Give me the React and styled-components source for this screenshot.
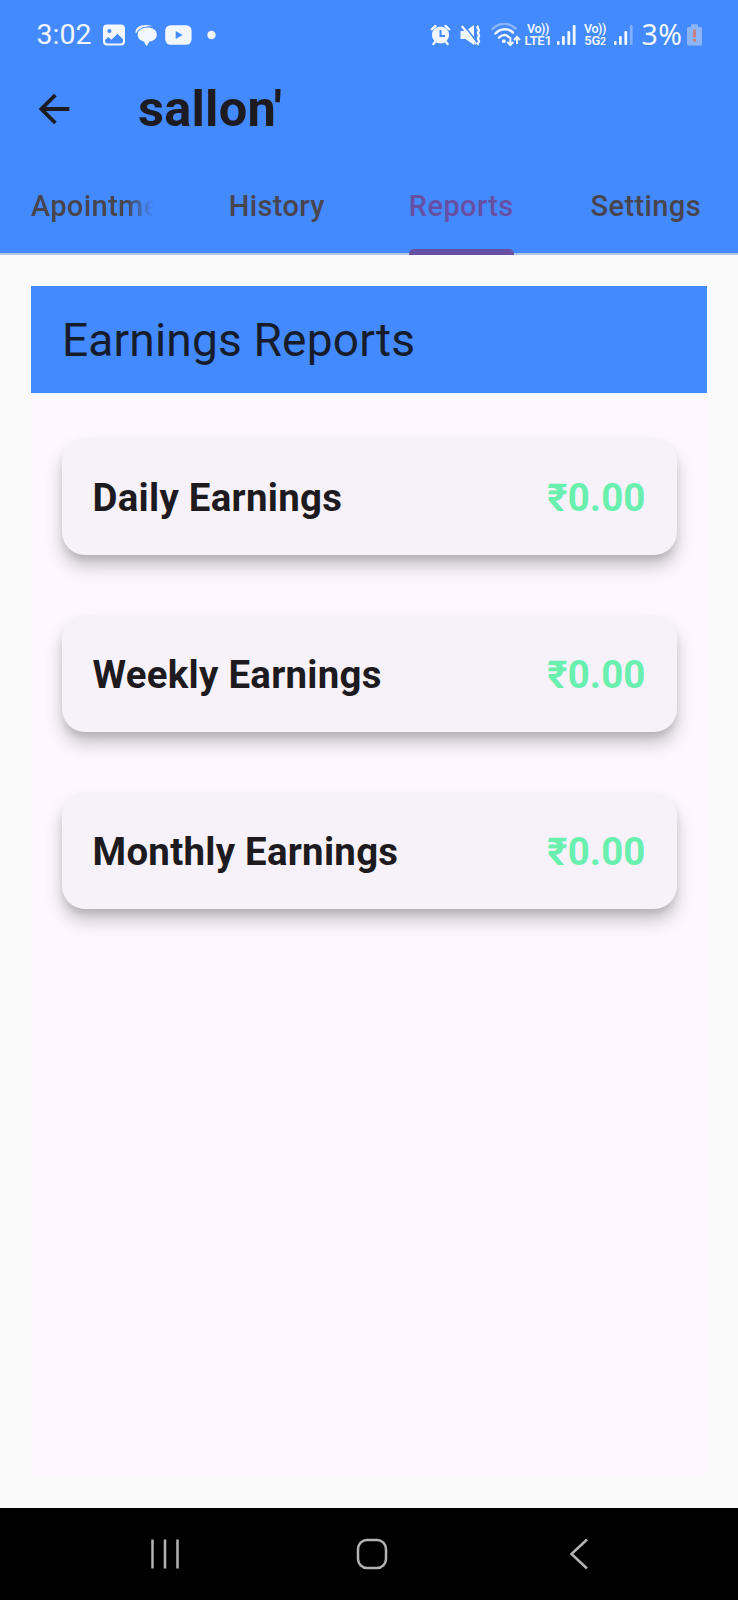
import React from "react";
import styled, { createGlobalStyle } from "styled-components";

const GlobalStyle = createGlobalStyle`
  * { box-sizing: border-box; }
  body { margin: 0; background: #fafafa; font-family: Roboto, "Noto Sans", sans-serif; color: #1d1b20; }
`;

const Screen = styled.div`
  width: 738px;
  height: 1600px;
  display: flex;
  flex-direction: column;
  background: #fafafa;
  overflow: hidden;
`;

const Header = styled.header`
  height: 255px;
  flex: none;
  display: flex;
  flex-direction: column;
  background: #448aff;
  border-bottom: 2px solid #b3c3ea;
`;

const StatusBar = styled.div`
  height: 56px;
  flex: none;
  padding: 13px 36.5px 0 36.5px;
  display: flex;
  justify-content: space-between;
  color: #f2f7ff;
`;

const StatusGroup = styled.div`
  display: flex;
  align-items: center;
  height: 43px;
`;

const Clock = styled.span`
  width: 66.5px;
  font-size: 28.5px;
  line-height: 43px;
  white-space: nowrap;
`;

const BatteryLevel = styled.span`
  width: 45px;
  margin-left: 9px;
  font-family: "Noto Sans", sans-serif;
  font-size: 28.5px;
  line-height: 41px;
  letter-spacing: 0.4px;
  white-space: nowrap;
`;

const StatusIcon = styled.svg`
  display: block;
  flex: none;
  height: 24px;
  width: ${(p) => p.$width}px;
  margin-left: ${(p) => p.$gap}px;
  fill: currentColor;
`;

const Network = styled.div`
  display: flex;
  flex-direction: column;
  align-items: center;
  flex: none;
  width: ${(p) => p.$width}px;
  margin-left: ${(p) => p.$gap}px;
  padding-top: 1px;
  font-weight: 600;
  font-size: 12.5px;
  line-height: 12px;
  letter-spacing: -0.4px;
  white-space: nowrap;
`;

const NetworkName = styled.span`
  font-size: 13px;
  letter-spacing: -0.3px;
`;

const Small = styled.span`
  font-size: 10.5px;
`;

const AppBar = styled.div`
  height: 106px;
  flex: none;
  display: flex;
  align-items: center;
  padding-left: 31px;
`;

const BackIcon = styled.svg`
  width: 46px;
  height: 46px;
  margin-right: 61px;
  fill: #1d1b20;
`;

const Title = styled.h1`
  margin: 0 0 1px;
  font-size: 50.5px;
  line-height: 60px;
  font-weight: 700;
  letter-spacing: 0.25px;
`;

const Tabs = styled.nav`
  flex: 1;
  display: grid;
  grid-template-columns: repeat(4, 1fr);
  margin-bottom: -2px;
`;

const Tab = styled.div`
  padding: 0 30.75px;
  display: flex;
  flex-direction: column;
  align-items: center;
  justify-content: space-between;
  min-width: 0;
  color: ${(p) => (p.$active ? "#6750a4" : "#49454f")};
`;

const TabLabel = styled.span`
  padding-top: 26px;
  font-size: 29px;
  line-height: 37px;
  font-weight: 500;
  letter-spacing: 0.4px;
  white-space: nowrap;
  max-width: 100%;
  overflow: hidden;
  ${(p) => p.$fade && "mask-image: linear-gradient(to right, #000 78%, transparent 100%);"}
`;

const Indicator = styled.div`
  width: 105px;
  height: 6px;
  border-radius: 5px 5px 0 0;
  background: #6750a4;
`;

const Content = styled.main`
  flex: 1;
  padding: 31px 31px 33px;
  display: flex;
`;

const Panel = styled.section`
  flex: 1;
  background: #fef7ff;
`;

const PanelTitle = styled.h2`
  margin: 0;
  height: 107px;
  padding-left: 31px;
  background: #448aff;
  color: #161c2b;
  font-size: 46.1px;
  font-weight: 400;
  line-height: 108px;
  letter-spacing: 0.16px;
`;

const CardList = styled.div`
  padding: 45px 30.5px 0;
  display: flex;
  flex-direction: column;
  gap: 60px;
`;

const Card = styled.div`
  height: 117px;
  padding: 2px 31px 0;
  display: flex;
  align-items: center;
  justify-content: space-between;
  border-radius: 23px;
  background: #f7f2fa;
  font-size: 38.4px;
  font-weight: 700;
  box-shadow: 0 12px 18px rgba(0, 0, 0, 0.2), 0 6px 8px -2px rgba(0, 0, 0, 0.14);
`;

const CardLabel = styled.span`
  letter-spacing: 0.28px;
`;

const Amount = styled.span`
  letter-spacing: 0.15px;
  color: #69f0ae;
`;

const NavBar = styled.footer`
  height: 92px;
  flex: none;
  padding: 0 55.5px 0 61.5px;
  display: grid;
  grid-template-columns: repeat(3, 1fr);
  align-items: center;
  justify-items: center;
  background: #000;
`;

const NavIcon = styled.svg`
  width: 34px;
  height: 34px;
  fill: none;
  stroke: #b4b4b4;
  stroke-width: 2.5;
`;

const Signal = ({ gap, weak }) => (
  <StatusIcon $width={19} $gap={gap} viewBox="0 0 19 24">
    <rect x="0" y="18" width="2.6" height="4" rx="1" />
    <rect x="5" y="13" width="2.8" height="9" rx="1" />
    <rect x="10.4" y="8" width="2.8" height="14" rx="1" />
    <rect x="15.8" y="2" width="2.8" height="20" rx="1" opacity={weak ? 0.35 : 1} />
  </StatusIcon>
);

const earnings = ["Daily Earnings", "Weekly Earnings", "Monthly Earnings"];

export default function App() {
  return (
    <Screen>
      <GlobalStyle />
      <Header>
        <StatusBar>
          <StatusGroup>
            <Clock>3:02</Clock>
            <StatusIcon $width={22} $gap={0} viewBox="0 0 22 24">
              <path fillRule="evenodd" d="M4 1.5h14a4 4 0 0 1 4 4v13a4 4 0 0 1-4 4H4a4 4 0 0 1-4-4v-13a4 4 0 0 1 4-4ZM6.4 6.1a2 2 0 1 0 0 4 2 2 0 0 0 0-4ZM2 17.5c0 2 1 3 3 3h12c2 0 3-1 3-3v-1.2l-5.5-5.6-6.1 6-3-2.8L2 17Z" />
            </StatusIcon>
            <StatusIcon $width={22} $gap={9.5} viewBox="0 0 22 24">
              <path d="M12.3 4.600c5.400 0 9.500 2.700 9.500 6.900 0 3.900-2.900 6.400-7.200 7.100-.9 1-2 2.800-2.700 4.500-1.500-1.300-2.300-2.800-2.700-4.600-3.900-.8-6.500-3.100-6.500-7 0-4.100 4.200-6.900 9.600-6.900Z" />
              <path d="M.7 10.500C-.5 5.500 4.500 1.500 11.500 2c2.500.1 4.400.6 6 1.300C10 2.700 4 4.700 1.600 9.500Z" />
            </StatusIcon>
            <StatusIcon $width={27} $gap={8} viewBox="0 0 27 24">
              <rect x="0.2" y="2.2" width="26.4" height="19.6" rx="5.5" />
              <path d="M10.700 8v8l7-4Z" fill="#448aff" />
            </StatusIcon>
            <StatusIcon $width={9} $gap={15} viewBox="0 0 9 24">
              <circle cx="4.5" cy="12" r="4.2" />
            </StatusIcon>
          </StatusGroup>
          <StatusGroup>
            <StatusIcon $width={21} $gap={0} viewBox="0 0 21 24">
              <circle cx="10.5" cy="12" r="8.6" />
              <path d="M1.8 6.3 5.5 3M19.2 6.3 15.5 3M5 19l-1.6 2M16 19l1.6 2" stroke="currentColor" strokeWidth="2.4" strokeLinecap="round" />
              <path d="M10.5 7v6H15" stroke="#448aff" strokeWidth="2" fill="none" />
            </StatusIcon>
            <StatusIcon $width={21} $gap={9.5} viewBox="0 0 21 24">
              <path d="M.5 8h5L14 2v20l-8.5-6h-5Z" />
              <path d="M18.5 3c-3 2 2 3.500 0 5.500s2 3.500 0 5.500 2 3.500 0 5.500-.5 2-1 2.500" fill="none" stroke="currentColor" strokeWidth="2.4" />
              <path d="M4 2.500 17 19" stroke="#448aff" strokeWidth="1.6" />
              <path d="M1.800 3 16 21" stroke="currentColor" strokeWidth="2.2" />
            </StatusIcon>
            <StatusIcon $width={30} $gap={9.5} viewBox="0 0 30 24">
              <g fill="none" stroke="currentColor" strokeWidth="2.5" strokeLinecap="round">
                <path d="M1.5 6C8-.8 18-.8 24.5 5.5" opacity=".4" />
                <path d="M4.5 10.500c5-5.500 13-5.500 17.500-1" />
                <path d="M8 14.700c3-3.300 7-3.300 9.500-.8" />
              </g>
              <circle cx="12.8" cy="18.2" r="1.9" />
              <path d="M19.3 14v8m-3-3 3 3 3-3M26 21v-7m-3 3 3-3 3 3" fill="none" stroke="currentColor" strokeWidth="2" />
            </StatusIcon>
            <Network $width={28} $gap={3.5}>
              <span>Vo))</span>
              <NetworkName>LTE1</NetworkName>
            </Network>
            <Signal gap={5} />
            <Network $width={24} $gap={7}>
              <span>Vo))</span>
              <NetworkName>5G<Small>2</Small></NetworkName>
            </Network>
            <Signal gap={6.5} weak />
            <BatteryLevel>3%</BatteryLevel>
            <StatusIcon $width={15} $gap={0} viewBox="0 0 15 24">
              <path d="M1.5 4H4V2q0-.7.7-.7h5.6Q11 1.300 11 2v2h2.500Q15 4 15 5.500V21q0 1.500-1.500 1.500h-12Q0 22.500 0 21V5.500Q0 4 1.500 4Z" fill="#8cb5f8" />
              <path d="M6.1 6.500h2.800v8H6.100Zm0 9.500h2.800v2.700H6.100Z" fill="#c97f7c" />
            </StatusIcon>
          </StatusGroup>
        </StatusBar>
        <AppBar>
          <BackIcon viewBox="0 0 24 24">
            <path d="M20 11H7.83l5.590-5.590L12 4l-8 8 8 8 1.410-1.410L7.830 13H20v-2z" />
          </BackIcon>
          <Title>sallon'</Title>
        </AppBar>
        <Tabs>
          <Tab><TabLabel $fade>Apointments</TabLabel></Tab>
          <Tab><TabLabel>History</TabLabel></Tab>
          <Tab $active><TabLabel>Reports</TabLabel><Indicator /></Tab>
          <Tab><TabLabel>Settings</TabLabel></Tab>
        </Tabs>
      </Header>
      <Content>
        <Panel>
          <PanelTitle>Earnings Reports</PanelTitle>
          <CardList>
            {earnings.map((label) => (
              <Card key={label}>
                <CardLabel>{label}</CardLabel>
                <Amount>₹0.00</Amount>
              </Card>
            ))}
          </CardList>
        </Panel>
      </Content>
      <NavBar>
        <NavIcon viewBox="0 0 34 34"><path d="M4.5 2.500v29M17 2.500v29M29.500 2.500v29" /></NavIcon>
        <NavIcon viewBox="0 0 34 34"><rect x="3" y="3" width="28" height="28" rx="9" /></NavIcon>
        <NavIcon viewBox="0 0 34 34"><path d="M25 2.500 9.500 17 25 31.500" /></NavIcon>
      </NavBar>
    </Screen>
  );
}
